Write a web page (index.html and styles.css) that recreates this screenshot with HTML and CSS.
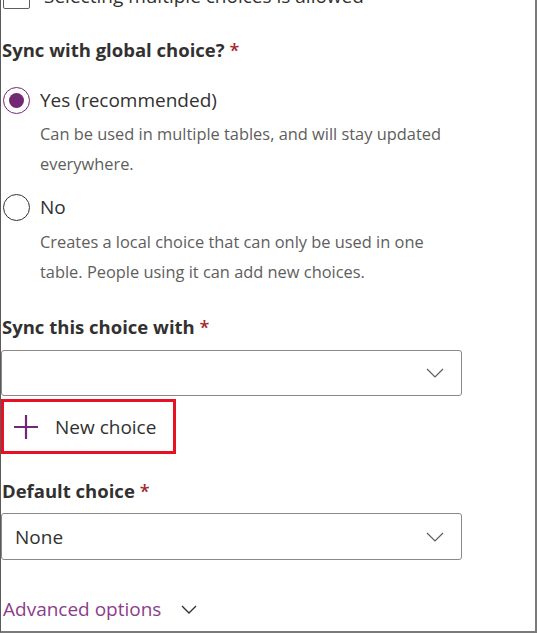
FILE: index.html
```html
<!DOCTYPE html>
<html>
<head>
<meta charset="utf-8">
<link rel="stylesheet" href="styles.css">
</head>
<body>
<div class="frame">
  <div class="check-row">
    <span class="checkbox"></span>
    <span class="check-label">Selecting multiple choices is allowed</span>
  </div>

  <div class="label label-first">Sync with global choice? <span class="req">*</span></div>

  <div class="radio-row radio-yes">
    <span class="radio checked"><span class="dot"></span></span>
    <span class="radio-text">Yes (recommended)</span>
  </div>
  <div class="desc desc-yes">Can be used in multiple tables, and will stay updated<br>everywhere.</div>

  <div class="radio-row radio-no">
    <span class="radio"></span>
    <span class="radio-text">No</span>
  </div>
  <div class="desc desc-no">Creates a local choice that can only be used in one<br>table. People using it can add new choices.</div>

  <div class="label label-sync">Sync this choice with <span class="req">*</span></div>
  <div class="dropdown dd-sync">
    <span class="dd-value"></span>
    <svg class="chev" width="18" height="10" viewBox="0 0 18 10"><path d="M1 1 L9 9 L17 1" fill="none" stroke="#605e5c" stroke-width="1.2"/></svg>
  </div>

  <div class="new-choice">
    <svg class="plus" width="26" height="26" viewBox="0 0 26 26"><path d="M13 1 V25 M1 13 H25" stroke="#742774" stroke-width="2.2" fill="none"/></svg>
    <span class="new-text">New choice</span>
  </div>

  <div class="label label-default">Default choice <span class="req">*</span></div>
  <div class="dropdown dd-default">
    <span class="dd-value">None</span>
    <svg class="chev" width="18" height="10" viewBox="0 0 18 10"><path d="M1 1 L9 9 L17 1" fill="none" stroke="#605e5c" stroke-width="1.2"/></svg>
  </div>

  <div class="advanced">
    <span class="adv-text">Advanced options</span>
    <svg class="adv-chev" width="16" height="9" viewBox="0 0 16 9"><path d="M1 1 L8 8 L15 1" fill="none" stroke="#323130" stroke-width="1.4"/></svg>
  </div>
</div>
</body>
</html>
```
FILE: styles.css
```css
html, body {
  margin: 0;
  padding: 0;
  background: #ffffff;
}
.frame {
  box-sizing: border-box;
  width: 537px;
  height: 633px;
  overflow: hidden;
  border-left: 1px solid #5a5a5a;
  border-right: 2px solid #7a7a7a;
  border-bottom: 2px solid #7a7a7a;
  padding-left: 1px;
  font-family: "Open Sans", "Noto Sans", sans-serif;
  color: #323130;
  display: flex;
  flex-direction: column;
}
.check-row {
  display: flex;
  align-items: center;
  height: 26px;
  margin-top: -17px;
  gap: 14px;
}
.checkbox {
  box-sizing: border-box;
  width: 27px;
  height: 26px;
  margin-left: 1px;
  border: 1px solid #605e5c;
  border-radius: 2px;
}
.check-label {
  font-size: 19px;
  color: #323130;
}
.label {
  font-size: 18.5px;
  font-weight: 700;
  line-height: 30px;
  height: 30px;
  color: #323130;
  white-space: nowrap;
}
.req {
  color: #a4262c;
  font-weight: 600;
  font-size: 18px;
}
.label-first { margin-top: 26px; }
.radio-row {
  display: flex;
  align-items: center;
  height: 30px;
  gap: 10px;
}
.radio-yes { margin-top: 20px; }
.radio-no { margin-top: 13px; }
.radio {
  box-sizing: border-box;
  width: 27px;
  height: 27px;
  border: 1.5px solid #323130;
  border-radius: 50%;
  margin-left: 1px;
  display: flex;
  align-items: center;
  justify-content: center;
  flex: none;
}
.radio.checked {
  border-color: #742774;
}
.dot {
  width: 15px;
  height: 15px;
  border-radius: 50%;
  background: #742774;
}
.radio-text {
  font-size: 19px;
  color: #323130;
}
.desc {
  margin-left: 38px;
  font-size: 16.4px;
  line-height: 30px;
  color: #605e5c;
}
.desc-yes { margin-top: 4px; }
.desc-no { margin-top: 5px; }
.label-sync { margin-top: 25px; }
.dropdown {
  box-sizing: border-box;
  width: 461px;
  margin-left: -1px;
  border: 1px solid #8a8886;
  border-radius: 3px;
  display: flex;
  align-items: center;
  justify-content: space-between;
  padding: 0 17px 0 13px;
}
.dd-sync { margin-top: 8px; height: 46px; }
.dd-default { margin-top: 7px; height: 47px; }
.dd-value {
  font-size: 19px;
  color: #323130;
}
.new-choice {
  box-sizing: border-box;
  width: 175px;
  height: 55px;
  margin-top: 3px;
  margin-left: -1px;
  border: 3px solid #e81123;
  display: flex;
  align-items: center;
  padding-left: 9px;
  gap: 16px;
}
.new-text {
  font-size: 19px;
  color: #323130;
}
.label-default { margin-top: 22px; }
.advanced {
  margin-top: 34px;
  height: 30px;
  display: flex;
  align-items: center;
  gap: 20px;
  padding-left: 1px;
}
.adv-text {
  font-size: 19px;
  color: #8b3d8b;
}
```
